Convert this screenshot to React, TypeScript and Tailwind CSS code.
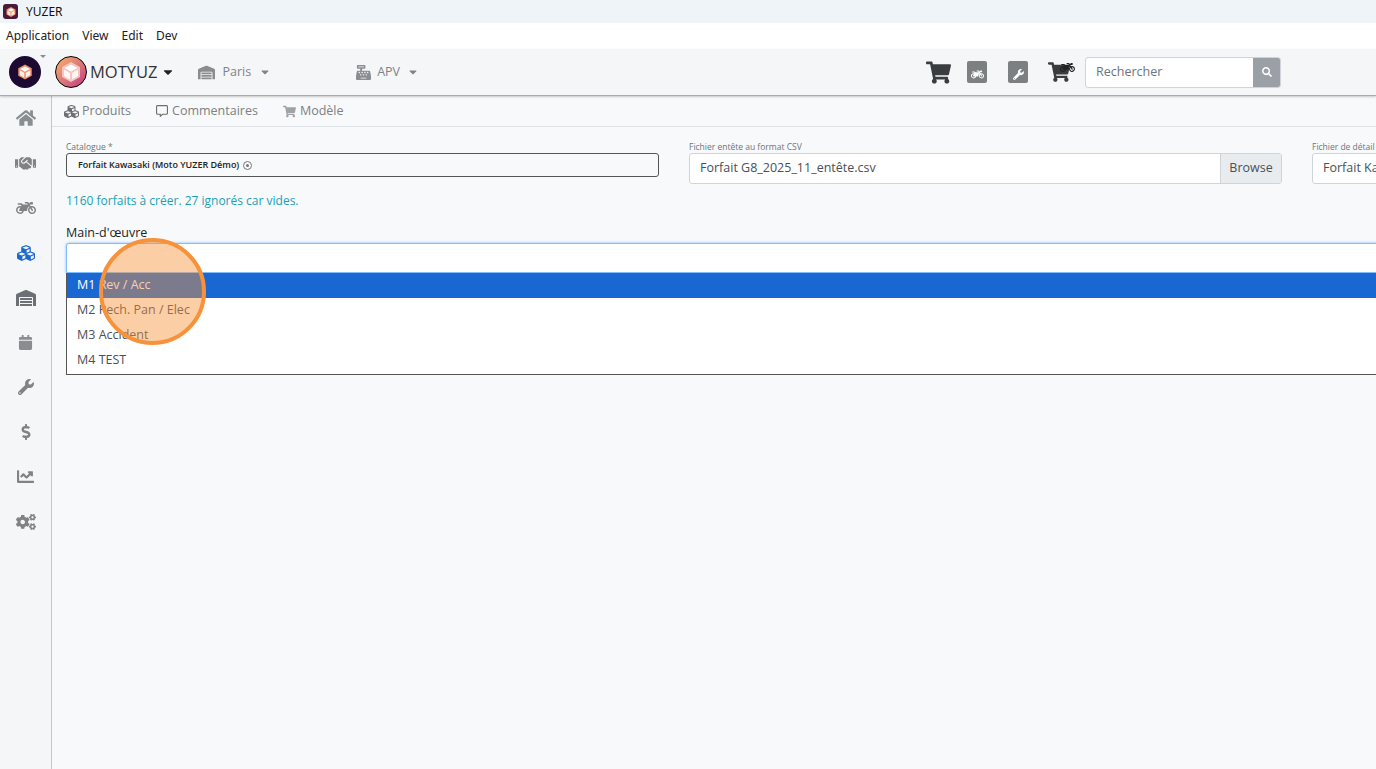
import {
  FaCalendar,
  FaCaretDown,
  FaCashRegister,
  FaChartLine,
  FaCogs,
  FaCubes,
  FaDollarSign,
  FaHandshake,
  FaHome,
  FaMotorcycle,
  FaRegCommentAlt,
  FaSearch,
  FaShoppingCart,
  FaWarehouse,
  FaWrench,
} from "react-icons/fa";

// petit logo cube de l'application
function Cube({ size, a = "#f6c9b8", b = "#fff" }: { size: number; a?: string; b?: string }) {
  return (
    <svg width={size} height={size} viewBox="0 0 24 24">
      <path d="M12 2 21 7v10l-9 5-9-5V7z" fill={a} />
      <path d="M12 4.5 18.5 8 12 11.5 5.5 8z" fill={b} />
      <path d="M11 13v6.5L5 16V9.5zM13 13l6-3.5V16l-6 3.5z" fill={b} opacity="0.85" />
    </svg>
  );
}

const SIDE_ITEMS = [
  { icon: <FaHome size={20} />, color: "text-[#8a8d90]" },
  { icon: <FaHandshake size={21} />, color: "text-[#808386]" },
  { icon: <FaMotorcycle size={20} />, color: "text-[#808386]" },
  { icon: <FaCubes size={18} />, color: "text-[#1a68d0]" },
  { icon: <FaWarehouse size={20} />, color: "text-[#6c7074]" },
  { icon: <FaCalendar size={15} />, color: "text-[#8a8d90]" },
  { icon: <FaWrench size={16} />, color: "text-[#808386]" },
  { icon: <FaDollarSign size={16} />, color: "text-[#808386]" },
  { icon: <FaChartLine size={17} />, color: "text-[#808386]" },
  { icon: <FaCogs size={20} />, color: "text-[#808386]" },
];

const OPTIONS = ["M1 Rev / Acc", "M2 Rech. Pan / Elec", "M3 Accident", "M4 TEST"];

export default function App() {
  return (
    <div className="relative flex h-[769px] w-[1376px] flex-col overflow-hidden bg-[#f8f9fa] font-['Open_Sans',sans-serif] text-[#495057]">
      {/* barre de titre */}
      <div className="flex h-[23px] items-center gap-[8px] bg-[#eff4f9] pl-[3px] font-['Noto_Sans',sans-serif] text-[12px] text-[#111]">
        <div className="flex h-[15px] w-[15px] items-center justify-center rounded-[3px] bg-[#4a1a3c]">
          <Cube size={12} a="#f08a5d" />
        </div>
        <span>YUZER</span>
      </div>

      {/* menu */}
      <div className="flex h-[26px] items-center gap-[13px] bg-white pl-[6px] font-['Noto_Sans',sans-serif] text-[12px] text-[#222]">
        <span>Application</span>
        <span>View</span>
        <span>Edit</span>
        <span>Dev</span>
      </div>

      {/* entête */}
      <div className="relative z-10 flex h-[47px] items-center border-b border-[#a9abad] bg-[#f4f6f8] shadow-[0_1px_2px_rgba(0,0,0,0.2)]">
        <div className="relative ml-[9px] flex h-[32px] w-[32px] items-center justify-center rounded-full bg-[#1d0a33]">
          <Cube size={18} a="#ef8f6a" />
          <span className="absolute right-[-5px] top-[-1px] border-x-[3px] border-t-[3px] border-x-transparent border-t-[#8a8d90]" />
        </div>
        <div className="ml-[14px] flex h-[32px] w-[32px] items-center justify-center rounded-full border border-black bg-gradient-to-br from-[#f7b267] to-[#c2347f]">
          <Cube size={24} a="#f3c6c0" />
        </div>
        <span className="ml-[3px] text-[16.5px] text-[#333]">MOTYUZ</span>
        <FaCaretDown size={14} className="ml-[4px] text-[#222]" />
        <FaWarehouse size={17} className="ml-[23px] text-[#8a8d90]" />
        <span className="ml-[7px] text-[12.5px] text-[#808386]">Paris</span>
        <FaCaretDown size={12} className="ml-[8px] text-[#808386]" />
        <FaCashRegister size={15} className="ml-[85px] text-[#8a8d90]" />
        <span className="ml-[6px] text-[12.5px] text-[#808386]">APV</span>
        <FaCaretDown size={12} className="ml-[7px] text-[#808386]" />

        <FaShoppingCart size={25} className="ml-[507px] text-[#3a3d40]" />
        <div className="ml-[16px] flex h-[22px] w-[20px] flex-col items-center justify-end rounded-[2px] bg-[#7d8083]">
          <FaMotorcycle size={13} className="mb-[2px] text-white" />
        </div>
        <div className="ml-[21px] flex h-[22px] w-[20px] flex-col items-center justify-end rounded-[2px] bg-[#7d8083]">
          <FaWrench size={11} className="mb-[3px] text-white" />
        </div>
        <div className="relative ml-[20px] h-[22px] w-[27px]">
          <FaShoppingCart size={22} className="text-[#3a3d40]" />
          <FaMotorcycle size={15} className="absolute right-0 top-[-1px] text-[#222]" />
        </div>
        <div className="ml-[10px] flex h-[31px] w-[196px] overflow-hidden rounded-[3px] border border-[#ced4da] bg-white">
          <span className="flex flex-1 items-center pl-[10px] text-[12.5px] text-[#6c757d]">Rechercher</span>
          <span className="flex w-[27px] items-center justify-center bg-[#9aa0a6] text-white">
            <FaSearch size={10} />
          </span>
        </div>
      </div>

      <div className="flex flex-1">
        {/* barre latérale */}
        <div className="flex w-[52px] shrink-0 flex-col items-center gap-[0px] border-r border-[#c4c6c8] bg-[#f4f6f8] pt-[-1px]">
          {SIDE_ITEMS.map((item, i) => (
            <div key={i} className={`flex h-[44.8px] w-full items-center justify-center ${item.color}`}>
              {item.icon}
            </div>
          ))}
        </div>

        <div className="min-w-0 flex-1">
          {/* onglets */}
          <div className="flex h-[31px] items-center border-b border-[#dee2e6] pl-[12px] text-[12.5px] text-[#7c8085]">
            <FaCubes size={15} className="text-[#6c7074]" />
            <span className="ml-[3px]">Produits</span>
            <FaRegCommentAlt size={12} className="ml-[25px] text-[#6c7074]" />
            <span className="ml-[4px]">Commentaires</span>
            <FaShoppingCart size={13} className="ml-[25px] text-[#a0a3a6]" />
            <span className="ml-[4px]">Modèle</span>
          </div>

          <div className="pl-[14px] pt-[14px]">
            <div className="flex gap-[30px]">
              <div className="w-[593px] shrink-0">
                <div className="text-[8.5px] leading-[12px] text-[#6c757d]">Catalogue *</div>
                <div className="flex h-[24px] items-center rounded-[3px] border border-[#555] pl-[11px] text-[9px] font-semibold text-[#222]">
                  Forfait Kawasaki (Moto YUZER Démo)
                  <span className="ml-[4px] flex h-[9px] w-[9px] items-center justify-center rounded-full border border-[#777]">
                    <span className="h-[3px] w-[3px] rounded-full bg-[#777]" />
                  </span>
                </div>
              </div>
              <div className="w-[593px] shrink-0">
                <div className="text-[8.5px] leading-[12px] text-[#6c757d]">Fichier entête au format CSV</div>
                <div className="flex h-[31px] rounded-[3px] border border-[#ced4da] bg-white text-[12.5px]">
                  <span className="flex flex-1 items-center pl-[10px]">Forfait G8_2025_11_entête.csv</span>
                  <span className="flex w-[61px] items-center justify-center border-l border-[#ced4da] bg-[#e9ecef]">Browse</span>
                </div>
              </div>
              <div className="w-[593px] shrink-0">
                <div className="text-[8.5px] leading-[12px] text-[#6c757d]">Fichier de détail au format CSV</div>
                <div className="flex h-[31px] items-center rounded-[3px] border border-[#ced4da] bg-white pl-[10px] text-[12.5px]">
                  Forfait Kawasaki.csv
                </div>
              </div>
            </div>

            <p className="mt-[8px] text-[12px] leading-[18px] text-[#17a2b8]">1160 forfaits à créer. 27 ignorés car vides.</p>

            <div className="mt-[14px] text-[12.5px] leading-[18px] text-[#212529]">Main-d'œuvre</div>
            <div className="mt-[1px] h-[30px] w-[1400px] rounded-t-[3px] border border-[#80bdff] bg-white shadow-[0_0_3px_rgba(0,123,255,0.5)]" />
            <div className="w-[1400px] border border-t-0 border-[#555] bg-white pb-[1px] text-[12.5px]">
              {OPTIONS.map((opt, i) => (
                <div key={opt} className={`flex h-[25px] items-center pl-[10px] ${i === 0 ? "bg-[#1967d2] text-white" : "text-[#495057]"}`}>
                  {opt}
                </div>
              ))}
            </div>
          </div>
        </div>
      </div>

      {/* surbrillance du curseur */}
      <div className="absolute left-[99px] top-[238px] z-20 h-[107px] w-[107px] rounded-full border-[4px] border-[#f7923a] bg-[#f7923a]/45" />
    </div>
  );
}
